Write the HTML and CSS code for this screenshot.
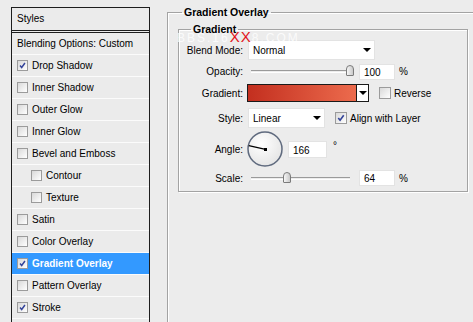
FILE: index.html
```html
<!DOCTYPE html>
<html lang="en">

<head>
    <meta charset="UTF-8">
    <title>Layer Style - Gradient Overlay</title>
    <link rel="stylesheet" href="styles.css">
</head>

<body>
    <div class="dialog">
        <div class="styles-panel">
            <div class="panel-head">Styles</div>
            <div class="panel-row">Blending Options: Custom</div>
            <div class="panel-row"><span class="check"><svg viewBox="0 0 11 11"><path d="M2.5 5.5L4.5 8L8.5 2.5" /></svg></span>Drop Shadow</div>
            <div class="panel-row"><span class="check"></span>Inner Shadow</div>
            <div class="panel-row"><span class="check"></span>Outer Glow</div>
            <div class="panel-row"><span class="check"></span>Inner Glow</div>
            <div class="panel-row"><span class="check"></span>Bevel and Emboss</div>
            <div class="panel-row sub"><span class="check"></span>Contour</div>
            <div class="panel-row sub"><span class="check"></span>Texture</div>
            <div class="panel-row"><span class="check"></span>Satin</div>
            <div class="panel-row"><span class="check"></span>Color Overlay</div>
            <div class="panel-row active"><span class="check"><svg viewBox="0 0 11 11"><path d="M2.5 5.5L4.5 8L8.5 2.5" /></svg></span>Gradient Overlay</div>
            <div class="panel-row"><span class="check"></span>Pattern Overlay</div>
            <div class="panel-row"><span class="check"><svg viewBox="0 0 11 11"><path d="M2.5 5.5L4.5 8L8.5 2.5" /></svg></span>Stroke</div>
            <div class="panel-row"></div>
        </div>

        <div class="settings">
            <fieldset class="group outer">
                <legend>Gradient Overlay</legend>
                <fieldset class="group inner">
                    <legend>Gradient</legend>

                    <div class="field row-blend">
                        <label>Blend Mode:</label>
                        <div class="select blend">Normal<span class="arrow"></span></div>
                    </div>

                    <div class="field row-opacity">
                        <label>Opacity:</label>
                        <div class="slider"><span class="thumb" style="left: 95px"></span></div>
                        <div class="num">100</div>
                        <span class="unit">%</span>
                    </div>

                    <div class="field row-gradient">
                        <label>Gradient:</label>
                        <div class="swatch">
                            <div class="ramp"></div>
                            <div class="swatch-drop"><span class="arrow"></span></div>
                        </div>
                        <span class="check opt"></span>
                        <span class="opt-text">Reverse</span>
                    </div>

                    <div class="field row-style">
                        <label>Style:</label>
                        <div class="select style">Linear<span class="arrow"></span></div>
                        <span class="check opt"><svg viewBox="0 0 11 11"><path d="M2.5 5.5L4.5 8L8.5 2.5" /></svg></span>
                        <span class="opt-text">Align with Layer</span>
                    </div>

                    <div class="field row-angle">
                        <label>Angle:</label>
                        <svg class="dial" viewBox="0 0 36 36" width="36" height="36">
                            <defs>
                                <radialGradient id="dialFill" cx="40%" cy="35%" r="70%">
                                    <stop offset="0" stop-color="#ffffff" />
                                    <stop offset="1" stop-color="#e4e4e4" />
                                </radialGradient>
                            </defs>
                            <circle cx="18" cy="18" r="17" fill="url(#dialFill)" stroke="#5f6a7e" stroke-width="1.5" />
                            <line x1="1.8" y1="14.6" x2="18.5" y2="18.3" stroke="#000" stroke-width="1.2" />
                            <rect x="17" y="17" width="3" height="3" fill="#000" />
                        </svg>
                        <div class="num angle">166</div>
                        <span class="degree">°</span>
                    </div>

                    <div class="field row-scale">
                        <label>Scale:</label>
                        <div class="slider"><span class="thumb" style="left: 32px"></span></div>
                        <div class="num">64</div>
                        <span class="unit">%</span>
                    </div>
                </fieldset>
            </fieldset>
        </div>

        <div class="watermark">BBS.16<span>XX</span>8.COM</div>
    </div>
</body>

</html>
```

FILE: styles.css
```css
body {
    margin: 0;
    background-color: #ececec;
    font-family: "Liberation Sans", Arial, sans-serif;
    font-size: 10px;
    color: #000;
    overflow: hidden;
}

.dialog {
    position: relative;
    display: flex;
    align-items: flex-start;
    width: 473px;
    height: 322px;
    overflow: hidden;
}

/* left list of effects */
.styles-panel {
    width: 137px;
    height: 330px;
    margin: 7px 0 0 11px;
    border: 1px solid #1e1e1e;
    border-bottom: none;
    background-color: #ebebeb;
    flex-shrink: 0;
}

.panel-head {
    height: 22px;
    line-height: 22px;
    padding-left: 5px;
    border-bottom: 3px double #1e1e1e;
}

.panel-row {
    display: flex;
    align-items: center;
    height: 21px;
    padding-left: 5px;
    border-bottom: 1px solid #fbfbfb;
}

.panel-row.sub {
    padding-left: 19px;
}

.panel-row.active {
    background-color: #3399ff;
    color: #fff;
    font-weight: bold;
}

.check {
    display: inline-block;
    width: 11px;
    height: 11px;
    margin-right: 4px;
    box-sizing: border-box;
    border: 1px solid #9b9b9b;
    background: linear-gradient(135deg, #d9d9d9, #ffffff);
    flex-shrink: 0;
}

.check svg {
    display: block;
    width: 9px;
    height: 9px;
}

.check path {
    fill: none;
    stroke: #34449a;
    stroke-width: 1.8;
}

/* right side settings */
.settings {
    margin: 6px 0 0 17px;
    flex-shrink: 0;
}

.group {
    margin: 0;
    border: 1px solid #a3a3a3;
    box-shadow: 1px 1px 0 #fff, inset 1px 1px 0 #fff;
}

.group legend {
    font-weight: bold;
    font-size: 10.5px;
    padding: 0 2px;
    line-height: 13px;
}

.outer {
    width: 320px;
    height: 330px;
    box-sizing: border-box;
    padding: 0 0 0 10px;
}

.outer > legend {
    margin-left: 4px;
}

.inner {
    width: 290px;
    box-sizing: border-box;
    margin-top: 4px;
    padding: 2px 0 2px 0;
}

.inner > legend {
    margin-left: 12px;
}

.field {
    display: flex;
    align-items: center;
}

.field label {
    width: 64px;
    margin-right: 5px;
    text-align: right;
    flex-shrink: 0;
}

.row-blend { height: 24px; }
.row-opacity { height: 19px; }
.row-gradient { height: 24px; }
.row-style { height: 26px; }
.row-angle { height: 36px; }
.row-scale { height: 22px; }

.select {
    display: flex;
    align-items: center;
    justify-content: space-between;
    height: 20px;
    box-sizing: border-box;
    padding: 0 3px 0 4px;
    background-color: #fff;
    border: 1px solid #e3e3e3;
}

.select.blend {
    width: 127px;
}

.select.style {
    width: 77px;
}

.arrow {
    width: 0;
    height: 0;
    border-left: 4px solid transparent;
    border-right: 4px solid transparent;
    border-top: 4px solid #000;
}

.slider {
    position: relative;
    width: 99px;
    height: 3px;
    margin: 0 9px 0 3px;
    border-top: 1px solid #9a9a9a;
    border-bottom: 1px solid #fff;
    box-sizing: border-box;
}

.thumb {
    position: absolute;
    top: -6px;
    width: 8px;
    height: 11px;
    box-sizing: border-box;
    border: 1px solid #7b7b7b;
    border-radius: 4px 4px 1px 1px;
    background: linear-gradient(90deg, #f6f6f6, #c9c9c9);
}

.num {
    width: 36px;
    height: 16px;
    line-height: 16px;
    box-sizing: border-box;
    padding-left: 4px;
    background-color: #fff;
    border: 1px solid #e3e3e3;
}

.num.angle {
    width: 39px;
    height: 17px;
    line-height: 17px;
    margin-left: 5px;
}

.unit {
    margin-left: 4px;
}

.degree {
    margin-left: 6px;
    align-self: flex-start;
    margin-top: 9px;
}

.dial {
    display: block;
    margin-left: -1px;
}

.swatch {
    display: flex;
    width: 122px;
    height: 18px;
    margin-left: -1px;
    box-sizing: border-box;
    border: 1px solid #1a1a1a;
}

.ramp {
    flex: 1;
    background: linear-gradient(90deg, #c32f1f, #ec6b4d);
}

.swatch-drop {
    display: flex;
    align-items: center;
    justify-content: center;
    width: 11px;
    border-left: 1px solid #1a1a1a;
    background-color: #fff;
}

.check.opt {
    width: 12px;
    height: 12px;
    margin: 0 3px 0 10px;
}

.check.opt svg {
    width: 10px;
    height: 10px;
}

/* watermark over the dialog */
.watermark {
    position: absolute;
    left: 177px;
    top: 28px;
    font-size: 12px;
    letter-spacing: 2px;
    color: rgba(255, 255, 255, 0.8);
}

.watermark span {
    color: #e3151b;
    font-size: 15px;
    letter-spacing: 1px;
}
```
